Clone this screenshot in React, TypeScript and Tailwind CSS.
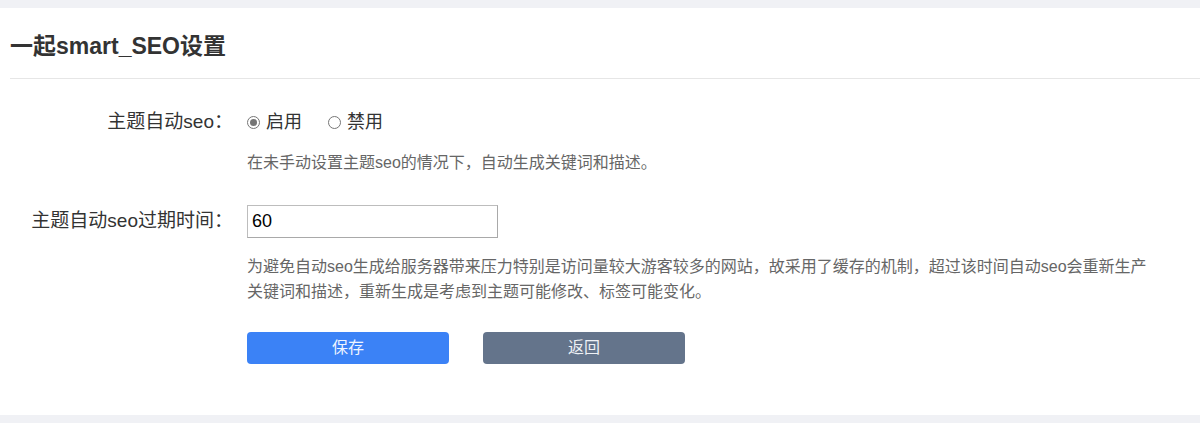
const FONT = "font-['Liberation_Sans','Noto_Sans_CJK_SC',sans-serif]"

function Radio({ checked, label }: { checked: boolean; label: string }) {
  return (
    <label className="flex items-center gap-[6px]">
      <span className="flex h-[13px] w-[13px] items-center justify-center rounded-full border border-[#767676] bg-white">
        {checked && <span className="h-[7px] w-[7px] rounded-full bg-[#767676]" />}
      </span>
      <span>{label}</span>
    </label>
  )
}

function Row({ label, children }: { label: string; children: React.ReactNode }) {
  return (
    <div className="flex">
      <div className="w-[223px] shrink-0 text-right text-[19px] leading-[24px] text-[#333]">{label}</div>
      <div className="ml-[14px] min-w-0 flex-1">{children}</div>
    </div>
  )
}

export default function App() {
  return (
    <div className={`${FONT} min-h-[423px] bg-[#f0f1f5] pt-[8px] text-[16px]`}>
      <div className="h-[407px] bg-white pl-[10px]">
        <h1 className="flex h-[70px] items-center pt-[6px] text-[23px] font-bold text-[#333]">一起smart_SEO设置</h1>
        <div className="border-t border-[#e6e6e6]" />

        <div className="pt-[31px]">
          <Row label="主题自动seo：">
            <div className="flex h-[24px] items-center gap-[26px] text-[18px] text-[#333]">
              <Radio checked label="启用" />
              <Radio checked={false} label="禁用" />
            </div>
            <p className="mt-[17px] leading-[24px] text-[#666]">在未手动设置主题seo的情况下，自动生成关键词和描述。</p>
          </Row>

          <div className="mt-[34px]">
            <Row label="主题自动seo过期时间：">
              <div className="-mt-[4px]">
                <input
                  defaultValue="60"
                  className="h-[33px] w-[251px] border border-[#bdbdbd] border-b-[#a9a9a9] border-r-[#a9a9a9] px-[4px] text-[18px] text-black outline-none"
                />
              </div>
              <p className="mt-[16px] w-[912px] leading-[25px] text-[#666]">
                为避免自动seo生成给服务器带来压力特别是访问量较大游客较多的网站，故采用了缓存的机制，超过该时间自动seo会重新生产关键词和描述，重新生成是考虑到主题可能修改、标签可能变化。
              </p>
              <div className="mt-[28px] flex gap-[34px]">
                <button className="h-[32px] w-[202px] rounded-[4px] bg-[#3b82f6] text-[#eef4ff]">保存</button>
                <button className="h-[32px] w-[202px] rounded-[4px] bg-[#64748b] text-[#eef1f5]">返回</button>
              </div>
            </Row>
          </div>
        </div>
      </div>
    </div>
  )
}
